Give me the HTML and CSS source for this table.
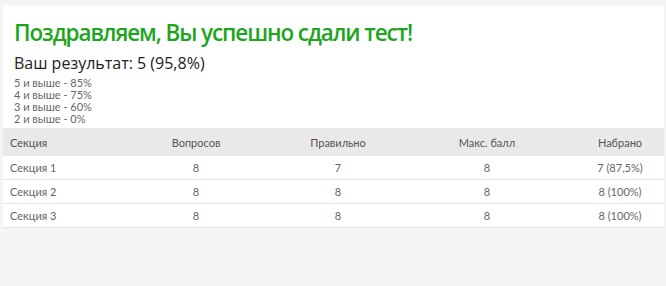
FILE: index.html
```html
<!DOCTYPE html>
<html lang="ru">
<head>
<meta charset="utf-8">
<link rel="stylesheet" href="styles.css">
</head>
<body>
<div class="card">
  <div class="intro">
    <h1 class="title">Поздравляем, Вы успешно сдали тест!</h1>
    <div class="result">Ваш результат: 5 (95,8%)</div>
    <div class="scale">
      <div>5 и выше - 85%</div>
      <div>4 и выше - 75%</div>
      <div>3 и выше - 60%</div>
      <div>2 и выше - 0%</div>
    </div>
  </div>
  <table class="grid">
    <colgroup>
      <col class="c1"><col class="c2"><col class="c3"><col class="c4"><col class="c5">
    </colgroup>
    <thead>
      <tr><th class="left">Секция</th><th>Вопросов</th><th>Правильно</th><th>Макс. балл</th><th>Набрано</th></tr>
    </thead>
    <tbody>
      <tr><td class="left">Секция 1</td><td>8</td><td>7</td><td>8</td><td>7 (87,5%)</td></tr>
      <tr><td class="left">Секция 2</td><td>8</td><td>8</td><td>8</td><td>8 (100%)</td></tr>
      <tr><td class="left">Секция 3</td><td>8</td><td>8</td><td>8</td><td>8 (100%)</td></tr>
    </tbody>
  </table>
</div>
</body>
</html>
```
FILE: styles.css
```css
html, body {
  margin: 0;
  padding: 0;
  background: #f4f4f4;
}
body {
  padding: 5px 2px 0 3px;
  font-family: "Open Sans", "Noto Sans", sans-serif;
}
.card {
  background: #ffffff;
}
.intro {
  padding: 13px 11px 3px 11px;
}
.title {
  margin: 0;
  font-family: "Open Sans", sans-serif;
  font-weight: 600;
  font-size: 22.5px;
  line-height: 30px;
  color: #1ea51e;
  letter-spacing: -1.1px;
}
.result {
  margin-top: 4px;
  font-size: 16px;
  line-height: 22px;
  color: #222;
}
.scale {
  margin-top: 3px;
  font-family: "Lato", sans-serif;
  font-size: 11px;
  line-height: 12px;
  color: #666;
}
.grid {
  width: 100%;
  border-collapse: collapse;
  table-layout: fixed;
  font-family: "Lato", sans-serif;
  font-size: 11px;
  color: #666;
}
.c1 { width: 111px; }
.c2 { width: 164px; }
.c3 { width: 120px; }
.c4 { width: 178px; }
.c5 { width: 88px; }
.grid th {
  background: #e9e9e9;
  font-weight: 400;
  height: 28px;
  padding: 0;
  text-align: center;
  color: #555;
}
.grid td {
  height: 23px;
  padding: 0;
  text-align: center;
  border-bottom: 1px solid #dde6e6;
}
.grid .left {
  text-align: left;
  padding-left: 7px;
}
```
